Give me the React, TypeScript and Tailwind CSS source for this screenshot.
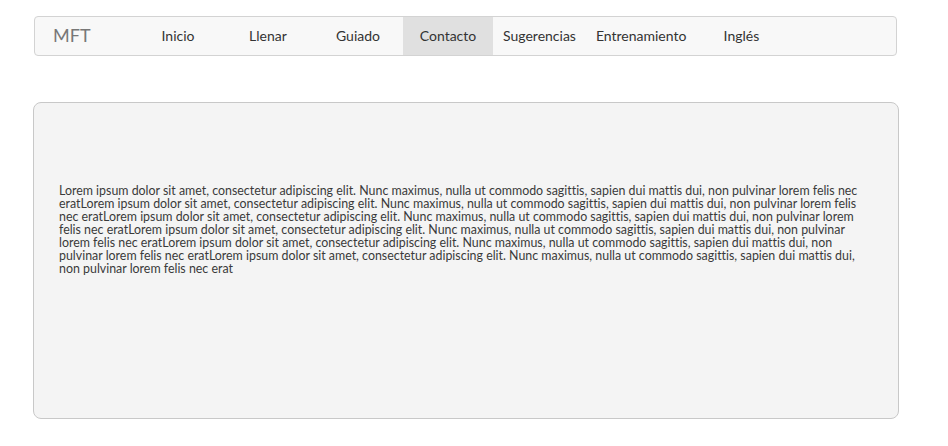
const LOREM =
  "Lorem ipsum dolor sit amet, consectetur adipiscing elit. Nunc maximus, nulla ut commodo sagittis, sapien dui mattis dui, non pulvinar lorem felis nec erat";

const links = ["Inicio", "Llenar", "Guiado", "Contacto", "Sugerencias", "Entrenamiento", "Inglés"];

export default function App() {
  return (
    <div
      className="min-h-[446px] bg-white pt-4 text-[#333]"
      style={{ fontFamily: "Lato, 'Open Sans', sans-serif" }}
    >
      <nav className="ml-[34px] flex h-10 w-[863px] items-stretch rounded-[4px] border border-[#d3d3d3] bg-[#f8f8f8]">
        <div className="flex w-[98px] items-center pb-px pl-[18px] text-[18px] text-[#777]">MFT</div>
        {links.map((l) => (
          <a
            key={l}
            className={
              "flex min-w-[90px] items-center justify-center px-[10px] pb-[2px] text-[14px] text-[#333] " +
              (l === "Contacto" ? "bg-[#e0e0e0]" : "")
            }
          >
            {l}
          </a>
        ))}
      </nav>

      <div className="ml-[33px] mt-[46px] h-[317px] w-[866px] rounded-[8px] border border-[#c8c8c8] bg-[#f4f4f4] px-[25px] pt-[81px]">
        <p className="text-[12.4px] leading-[13px] text-[#3a3a3a] [font-variant-ligatures:none]">
          {LOREM}
          {LOREM}
          {LOREM}
          {LOREM}
          {LOREM}
          {LOREM}
        </p>
      </div>
    </div>
  );
}
